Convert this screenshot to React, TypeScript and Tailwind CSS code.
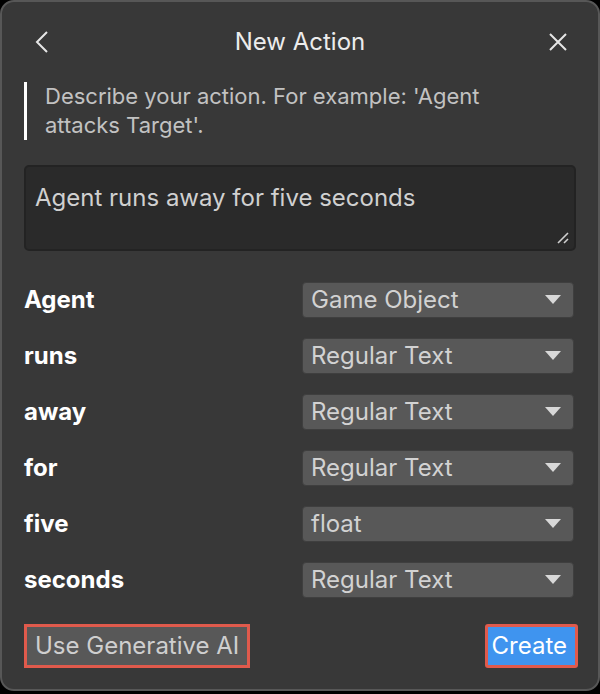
import React from "react";

const rows = [
  { word: "Agent", type: "Game Object" },
  { word: "runs", type: "Regular Text" },
  { word: "away", type: "Regular Text" },
  { word: "for", type: "Regular Text" },
  { word: "five", type: "float" },
  { word: "seconds", type: "Regular Text" },
];

const Caret = () => (
  <svg width="16" height="10" viewBox="0 0 16 10" className="shrink-0">
    <path d="M0 0 H16 L8 9 Z" fill="#d8d8d8" />
  </svg>
);

export default function App() {
  return (
    <div className="w-[600px] h-[694px] bg-black" style={{ fontFamily: "Inter, 'Noto Sans', sans-serif" }}>
      <div className="h-[691px] rounded-[14px] border-2 border-[#575757] bg-[#383838] flex flex-col px-[22px]">
        {/* header */}
        <div className="flex items-center justify-between h-[80px]">
          <svg width="20" height="24" viewBox="0 0 20 24" className="ml-[8px]">
            <path d="M15 2 L5 12 L15 22" stroke="#e6e6e6" strokeWidth="2" fill="none" />
          </svg>
          <div className="text-[24px] text-[#ececec]">New Action</div>
          <svg width="20" height="20" viewBox="0 0 20 20" className="mr-[8px]">
            <path d="M2 2 L18 18 M18 2 L2 18" stroke="#e6e6e6" strokeWidth="2" fill="none" />
          </svg>
        </div>

        {/* hint */}
        <div className="flex">
          <div className="w-[3px] bg-white shrink-0" />
          <p className="pl-[18px] max-w-[500px] text-[22px] leading-[29px] text-[#c2c2c2]">
            Describe your action. For example: 'Agent attacks Target'.
          </p>
        </div>

        {/* textarea */}
        <div className="relative mt-[25px] h-[86px] rounded-[5px] border-2 border-[#232323] bg-[#2a2a2a] px-[9px] pt-[13px]">
          <div className="text-[24px] text-[#d0d0d0]">Agent runs away for five seconds</div>
          <svg width="14" height="14" viewBox="0 0 14 14" className="absolute right-[4px] bottom-[4px]">
            <path d="M2 12 L12 2 M8 12 L12 8" stroke="#cfcfcf" strokeWidth="1.6" fill="none" />
          </svg>
        </div>

        {/* rows */}
        <div className="flex flex-col gap-[20px] mt-[31px]">
          {rows.map((r) => (
            <div key={r.word} className="flex items-center h-[36px]">
              <div className="w-[278px] text-[24px] font-bold text-white">{r.word}</div>
              <div className="flex items-center justify-between w-[272px] h-[36px] rounded-[4px] border border-[#3f3f3f] bg-[#585858] pl-[8px] pr-[12px]">
                <span className="text-[24px] text-[#d2d2d2]">{r.type}</span>
                <Caret />
              </div>
            </div>
          ))}
        </div>

        {/* footer */}
        <div className="flex items-center justify-between mt-[26px]">
          <button className="h-[44px] px-[8px] bg-[#585858] text-[24px] text-[#cfcfcf] border-[3px] border-[#e05a4c]">
            Use Generative AI
          </button>
          <button className="h-[44px] pl-[4px] pr-[8px] rounded-[3px] bg-[#3f94ef] text-[24px] text-white border-[3px] border-[#e05a4c] mr-[-2px]">
            Create
          </button>
        </div>
      </div>
    </div>
  );
}
